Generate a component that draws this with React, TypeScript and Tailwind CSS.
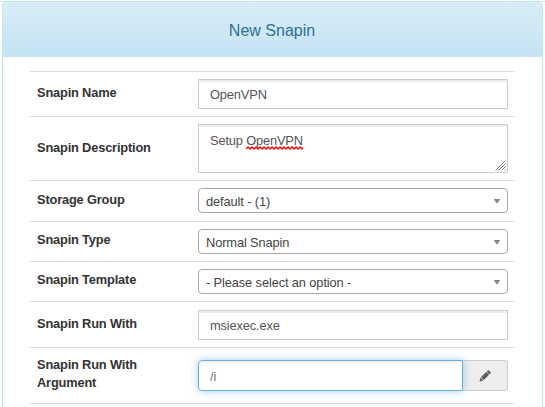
import type { ReactNode } from "react";

function Row({
  label,
  height,
  pad,
  children,
}: {
  label: string;
  height: string;
  pad: string;
  children: ReactNode;
}) {
  return (
    <div className={`flex border-t border-[#dddddd] pr-[7px] pl-[7.5px] ${height}`}>
      <div className={`w-[161.5px] shrink-0 ${pad}`}>
        <div className="w-[130px] origin-left scale-x-[0.95] text-[13.5px] leading-[18px] font-bold tracking-[-0.18px] text-[#333333]">
          {label}
        </div>
      </div>
      <div className="min-w-0 flex-1 pt-[7px]">{children}</div>
    </div>
  );
}

function TextBox({ children }: { children: ReactNode }) {
  return (
    <div className="flex h-[30px] items-center border border-[#cccccc] px-[11px] pt-[3px] text-[13.5px] tracking-[-0.14px] text-[#555555] shadow-[inset_0_2px_0_#eeeeee]">
      <span className="origin-left scale-x-[0.95]">{children}</span>
    </div>
  );
}

function SelectBox({ children }: { children: ReactNode }) {
  return (
    <div className="flex h-[25px] items-center justify-between rounded-[4px] border border-[#aaaaaa] px-[7px] text-[13.5px] tracking-[-0.12px] text-[#444444]">
      <span className="origin-left scale-x-[0.95] pt-[3px] leading-[20px]">{children}</span>
      <svg width="6" height="4" viewBox="0 0 6 4" fill="#888888">
        <path d="M0 0h6v.6L3.6 4H2.4L0 .6z" />
      </svg>
    </div>
  );
}

function Squiggle() {
  return (
    <svg
      className="absolute top-[13px] left-0"
      width="60"
      height="4"
      viewBox="0 0 57 4"
      preserveAspectRatio="none"
      fill="none"
      stroke="#ff0000"
      strokeWidth="1.3"
    >
      <path d="M0 3l2-2 2 2 2-2 2 2 2-2 2 2 2-2 2 2 2-2 2 2 2-2 2 2 2-2 2 2 2-2 2 2 2-2 2 2 2-2 2 2 2-2 2 2 2-2 2 2 2-2 2 2 2-2 2 2 2-2 2 2 2-2 2 2 2-2 2 2 2-2" />
    </svg>
  );
}

function Pencil() {
  return (
    <svg width="12" height="12" viewBox="0 0 12 12" fill="#555555">
      <path d="M8.6.7q.8-.7 1.6 0l1.2 1.2q.7.8 0 1.6l-.9.9-2.8-2.8zM7.2 2l2.8 2.8-5.3 5.3L1.9 7.3zM1.4 7.8l2.8 2.8-3.7.9z" />
      <path d="M2.6 8.5l4.6-4.6" stroke="#888888" strokeWidth=".7" />
    </svg>
  );
}

export default function App() {
  return (
    <div className="h-[407px] w-[545px] overflow-hidden bg-white pt-px font-['Liberation_Sans',Arial,sans-serif]">
      <div className="border-t border-[#dddddd]">
        <div className="-mt-px mr-[2px] ml-[2px] h-[420px] rounded-t-[4px] border border-[#bce8f1] bg-white">
          <div className="flex h-[55px] items-center justify-center rounded-t-[3px] bg-gradient-to-b from-[#d9edf7] to-[#c4e3f3] pt-[3px] pr-px text-[16px] text-[#31708f]">
            New Snapin
          </div>
          <div className="mt-[14px] mr-[27px] ml-[26px] border-b border-[#dddddd]">
            <Row label="Snapin Name" height="h-[45px]" pad="pt-[12px]">
              <TextBox>OpenVPN</TextBox>
            </Row>
            <Row label="Snapin Description" height="h-[64px]" pad="pt-[22px]">
              <div className="relative h-[49px] border border-[#cccccc] px-[11px] pt-[6px] text-[13.5px] leading-[19px] tracking-[-0.16px] text-[#555555] shadow-[inset_0_2px_0_#eeeeee]">
                <div className="origin-left scale-x-[0.95]">
                  Setup{" "}
                  <span className="relative">
                    OpenVPN
                    <Squiggle />
                  </span>
                </div>
                <svg
                  className="absolute right-px bottom-px"
                  width="11"
                  height="11"
                  viewBox="0 0 11 11"
                  stroke="#777777"
                >
                  <path d="M.5 10.5l10-10M3.5 10.5l7-7M6.5 10.5l4-4M9.5 10.5l1-1" />
                </svg>
              </div>
            </Row>
            <Row label="Storage Group" height="h-[41px]" pad="pt-[10px]">
              <SelectBox>default - (1)</SelectBox>
            </Row>
            <Row label="Snapin Type" height="h-[40px]" pad="pt-[9px]">
              <SelectBox>Normal Snapin</SelectBox>
            </Row>
            <Row label="Snapin Template" height="h-[40px]" pad="pt-[9px]">
              <SelectBox>- Please select an option -</SelectBox>
            </Row>
            <Row label="Snapin Run With" height="h-[46px]" pad="pt-[13px]">
              <div className="pt-px">
                <TextBox>msiexec.exe</TextBox>
              </div>
            </Row>
            <Row label="Snapin Run With Argument" height="h-[56px]" pad="pt-[8px]">
              <div className="mt-[5px] flex h-[31px]">
                <div className="relative flex w-[265px] items-center rounded-l-[4px] border border-[#66afe9] px-[11px] pt-[3px] text-[13.5px] text-[#777777] shadow-[inset_0_2px_0_#edf3f7,0_0_8px_rgba(102,175,233,0.6)]">
                  <span className="origin-left scale-x-[0.95]">/i</span>
                </div>
                <div className="flex flex-1 items-center justify-center rounded-r-[4px] border border-l-0 border-[#cccccc] bg-[#eeeeee]">
                  <Pencil />
                </div>
              </div>
            </Row>
          </div>
        </div>
      </div>
    </div>
  );
}
